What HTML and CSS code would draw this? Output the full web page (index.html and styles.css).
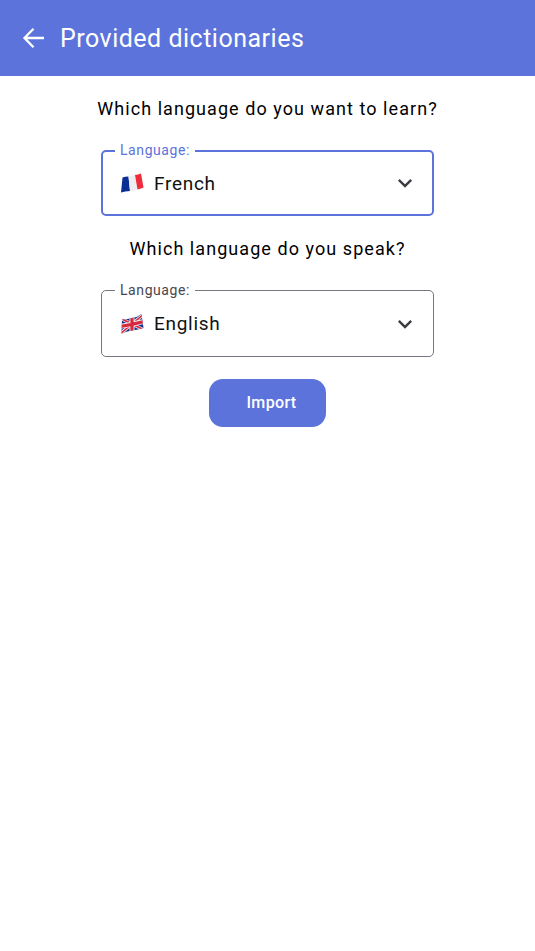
FILE: index.html
```html
<!DOCTYPE html>
<html lang="en">
<head>
    <meta charset="UTF-8">
    <meta name="viewport" content="width=device-width, initial-scale=1.0">
    <title>Provided dictionaries</title>
    <link rel="stylesheet" href="styles.css">
</head>
<body>
    <header class="app-bar">
        <svg class="back-icon" width="24" height="24" viewBox="0 0 24 24">
            <path d="M22 12H3M11.500 2.800 2.500 12l9 9.200" fill="none" stroke="#fff" stroke-width="2.300"/>
        </svg>
        <h1>Provided dictionaries</h1>
    </header>
    <main class="content">
        <p class="question">Which language do you want to learn?</p>
        <div class="select select-focused">
            <span class="select-label">Language:</span>
            <svg class="flag" width="24" height="20" viewBox="0 0 24 20">
                <path d="M2.500 4.500 Q5 3.700 8.500 3.500 L10 18 Q5 18 1 19.500 Z" fill="#0a2f94"/>
                <path d="M8.500 3.500 Q12 3.300 15 2 L17.500 16.500 Q13 18 10 18 Z" fill="#eeeef2"/>
                <path d="M15 2 Q18 1.500 21 .5 L23.500 14.500 Q20 16 17.500 16.500 Z" fill="#ef2b3c"/>
            </svg>
            <span class="select-value">French</span>
            <svg class="chevron" width="28" height="28" viewBox="0 0 24 24">
                <path d="M7.410 8.590 12 13.170l4.590-4.580L18 10l-6 6-6-6z" fill="#3c3c43"/>
            </svg>
        </div>
        <p class="question">Which language do you speak?</p>
        <div class="select">
            <span class="select-label">Language:</span>
            <svg class="flag" width="24" height="20" viewBox="0 0 24 20">
                <clipPath id="uk-shape">
                    <path d="M2 5.500 Q8 5 12 4 Q18 3 21.500 0 L23.500 14 Q18 15.500 12 16.500 Q6 17.500 1.500 19.500 Z"/>
                </clipPath>
                <g clip-path="url(#uk-shape)">
                    <rect width="24" height="20" fill="#14308c"/>
                    <path d="M0 4 24 16M24 0 0 20" stroke="#f0f0f4" stroke-width="3.200"/>
                    <path d="M0 4 24 16M24 0 0 20" stroke="#d8293c" stroke-width="1.600"/>
                    <path d="M12 0V20M0 12.500Q12 10.500 24 7.500" stroke="#f0f0f4" stroke-width="5" fill="none"/>
                    <path d="M12 0V20M0 12.500Q12 10.500 24 7.500" stroke="#d8293c" stroke-width="3.200" fill="none"/>
                </g>
            </svg>
            <span class="select-value">English</span>
            <svg class="chevron" width="28" height="28" viewBox="0 0 24 24">
                <path d="M7.410 8.590 12 13.170l4.590-4.580L18 10l-6 6-6-6z" fill="#3c3c43"/>
            </svg>
        </div>
        <button class="import-button">Import</button>
    </main>
</body>
</html>
```

FILE: styles.css
```css
body {
    font-family: Roboto, sans-serif;
    background-color: #fff;
    margin: 0;
    padding: 0;
}

.app-bar {
    background-color: #5c73dc;
    color: #fff;
    height: 76px;
    display: flex;
    align-items: center;
    padding-left: 22px;
    box-sizing: border-box;
}

.back-icon {
    margin-right: 14px;
}

h1 {
    margin: 0;
    font-size: 25px;
    font-weight: 400;
    letter-spacing: 0.5px;
}

.content {
    display: flex;
    flex-direction: column;
    align-items: center;
}

.question {
    margin: 0;
    font-size: 18px;
    line-height: 24px;
    letter-spacing: 1.06px;
    color: #000;
    padding-top: 21px;
}

.select {
    position: relative;
    width: 333px;
    height: 67px;
    box-sizing: border-box;
    margin-top: 29px;
    padding: 0 14px 0 18px;
    border: 1px solid #79747e;
    border-radius: 5px;
    display: flex;
    align-items: center;
}

.select-focused {
    height: 66px;
    border: 2px solid #5c73dc;
    padding: 0 13px 0 17px;
}

.select-label {
    position: absolute;
    left: 13px;
    top: -9px;
    background-color: #fff;
    padding: 0 5px;
    font-size: 14px;
    line-height: 16px;
    letter-spacing: 0.58px;
    color: #49454f;
}

.select-focused .select-label {
    left: 12px;
    top: -10px;
    color: #5c73dc;
}

.flag {
    margin-right: 10px;
}

.select-value {
    flex: 1;
    font-size: 19px;
    letter-spacing: 0.7px;
    color: #111;
}

.import-button {
    margin-top: 22px;
    width: 117px;
    height: 48px;
    background-color: #5c73dc;
    color: #fff;
    border: none;
    border-radius: 14px;
    font-family: Roboto, sans-serif;
    font-size: 16px;
    font-weight: 500;
    letter-spacing: 0.35px;
    padding: 0 0 2px 8px;
}
```
